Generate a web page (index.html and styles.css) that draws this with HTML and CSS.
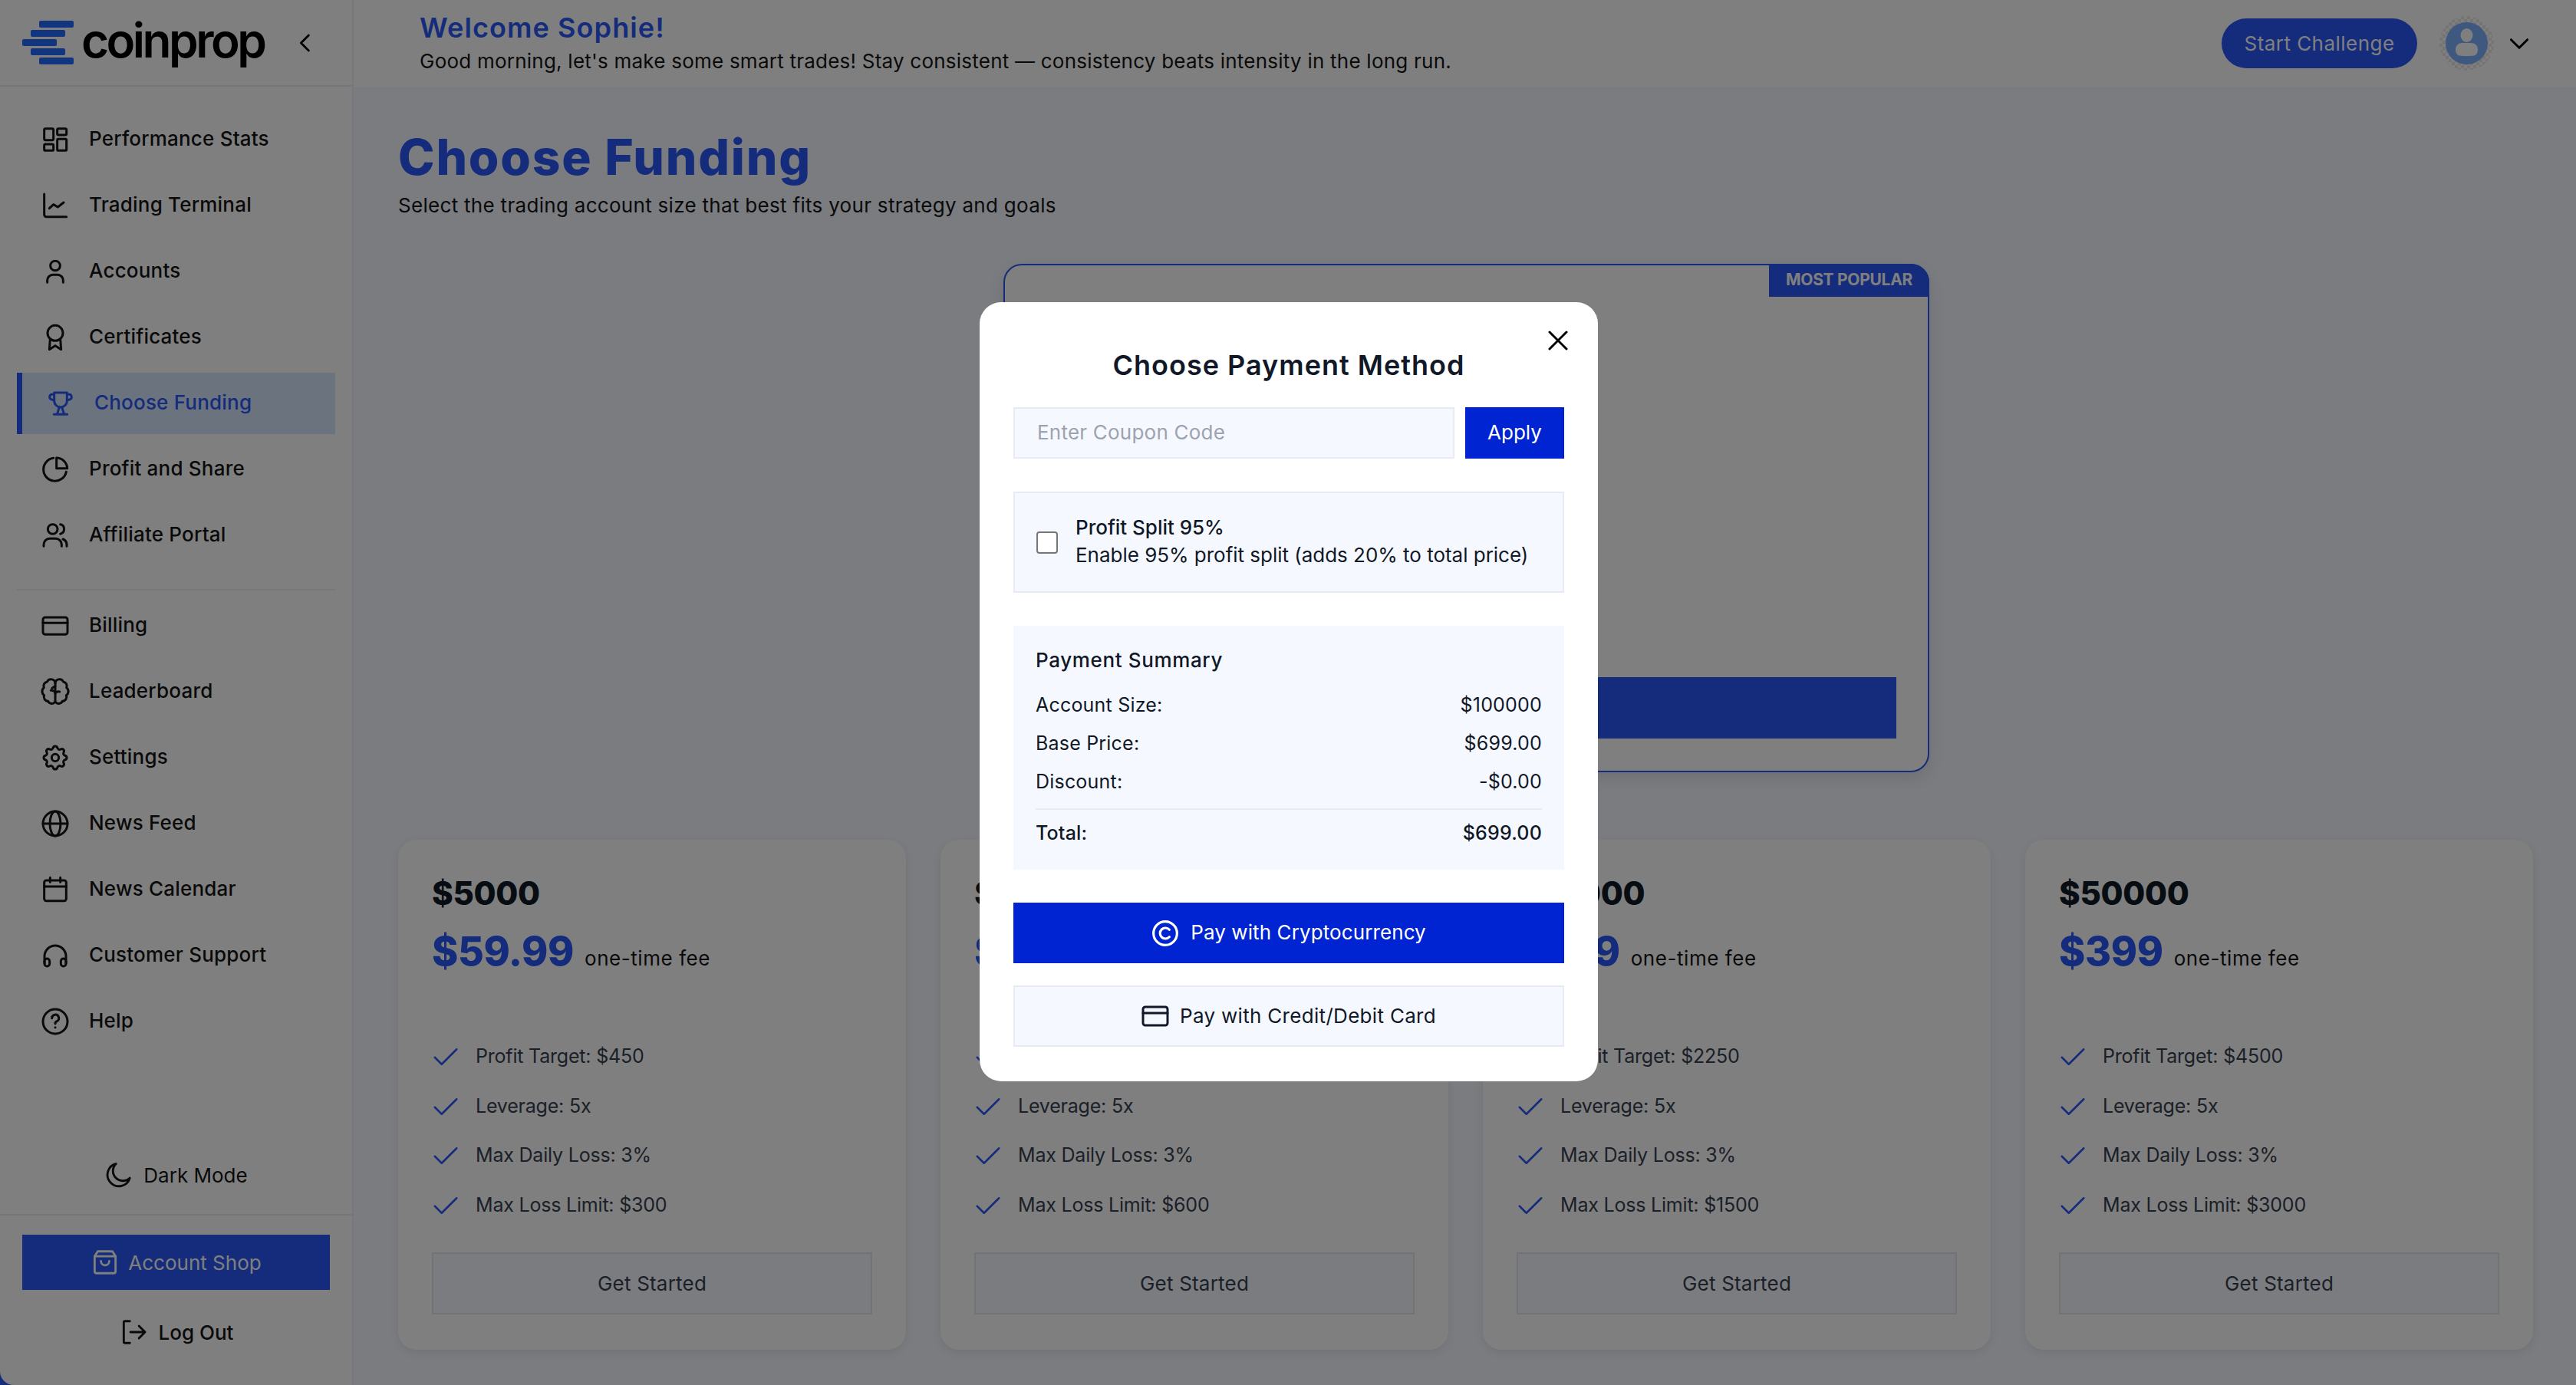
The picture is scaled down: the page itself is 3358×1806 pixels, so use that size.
FILE: index.html
```html
<!DOCTYPE html>
<html lang="en">
<head>
<meta charset="utf-8">
<title>Choose Funding</title>
<link rel="stylesheet" href="styles.css">
</head>
<body>
<svg class="sprite" aria-hidden="true">
  <symbol id="i-check" viewBox="0 0 24 24"><path d="M2.5 12.5l6 6 13-13"/></symbol>
</svg>
<div class="app">
  <aside class="sidebar">
    <div class="brand">
      <div class="logo">
        <span class="logo-bars"><i class="b1"></i><i class="b2"></i><i class="b3"></i><i class="b2"></i><i class="b1"></i></span>
        <span class="logo-text">coinprop</span>
      </div>
      <svg class="collapse" viewBox="0 0 24 24"><path d="M15.5 4l-8 8 8 8"/></svg>
    </div>
    <nav class="nav">
      <a class="nav-item"><svg class="ico" viewBox="0 0 24 24"><rect x="3.4" y="3.4" width="7.2" height="9" rx="1"/><rect x="13.6" y="3.4" width="7.2" height="5" rx="1"/><rect x="13.6" y="11.6" width="7.2" height="9" rx="1"/><rect x="3.4" y="15.6" width="7.2" height="5" rx="1"/></svg><span>Performance Stats</span></a>
      <a class="nav-item"><svg class="ico" viewBox="0 0 24 24"><path d="M3.4 3v16.2a1.6 1.6 0 0 0 1.6 1.6h15.8"/><path d="M7.4 14.2l3.2-3 3.4 2 4.6-3.6"/></svg><span>Trading Terminal</span></a>
      <a class="nav-item"><svg class="ico" viewBox="0 0 24 24"><circle cx="12" cy="7.5" r="3.8"/><path d="M5.8 20.5v-1.6a4.4 4.4 0 0 1 4.4-4.4h3.6a4.4 4.4 0 0 1 4.4 4.4v1.6"/></svg><span>Accounts</span></a>
      <a class="nav-item"><svg class="ico" viewBox="0 0 24 24"><circle cx="12" cy="8.6" r="6"/><path d="M8 13.4L7.4 21.4 12 18.4l4.6 3-.6-8"/></svg><span>Certificates</span></a>
      <a class="nav-item active"><svg class="ico" viewBox="0 0 24 24"><path d="M7 3.6h10v6.4a5 5 0 0 1-10 0z"/><path d="M7 5H5.4a2 2 0 0 0-.6 3.9L7 9.6M17 5h1.6a2 2 0 0 1 .6 3.9L17 9.6"/><path d="M11 15l-1.6 5M13 15l1.6 5M6.8 20.6h10.4"/></svg><span>Choose Funding</span></a>
      <a class="nav-item"><svg class="ico" viewBox="0 0 24 24"><path d="M20.6 14a9 9 0 1 1-10-10.8"/><path d="M13 3v8.2h8.4A8.6 8.6 0 0 0 13 3z"/></svg><span>Profit and Share</span></a>
      <a class="nav-item"><svg class="ico" viewBox="0 0 24 24"><circle cx="10" cy="7.2" r="3.8"/><path d="M3 20.6v-1.4a4.6 4.6 0 0 1 4.6-4.6h4.8a4.6 4.6 0 0 1 4.6 4.6v1.4"/><path d="M16 3.5a3.8 3.8 0 0 1 0 7.4"/><path d="M21 20.6v-1.4a4.6 4.6 0 0 0-3-4.2"/></svg><span>Affiliate Portal</span></a>
      <hr class="nav-sep">
      <a class="nav-item"><svg class="ico" viewBox="0 0 24 24"><rect x="2.4" y="5.4" width="19.2" height="13.4" rx="1.8"/><path d="M2.4 9.8h19.2"/></svg><span>Billing</span></a>
      <a class="nav-item"><svg class="ico" viewBox="0 0 24 24"><path d="M12 5.5a3.3 3.3 0 0 0-6.3-1.3 3.3 3.3 0 0 0-2.5 4.6 3.7 3.7 0 0 0 .2 6 3.3 3.3 0 0 0 3 4.6A3.2 3.2 0 0 0 12 19.8"/><path d="M12 5.5a3.3 3.3 0 0 1 6.3-1.3 3.3 3.3 0 0 1 2.5 4.6 3.7 3.7 0 0 1-.2 6 3.3 3.3 0 0 1-3 4.6A3.2 3.2 0 0 1 12 19.8z"/><path d="M12 13.4a3 3 0 0 0-3.4-2.4M12 13.4a3 3 0 0 1 3.4-1.4M9.5 9.2l2.5-1.5"/></svg><span>Leaderboard</span></a>
      <a class="nav-item"><svg class="ico" viewBox="0 0 24 24"><path d="M10.325 4.317c.426-1.756 2.924-1.756 3.35 0a1.724 1.724 0 0 0 2.573 1.066c1.543-.94 3.31.826 2.37 2.37a1.724 1.724 0 0 0 1.065 2.572c1.756.426 1.756 2.924 0 3.35a1.724 1.724 0 0 0-1.066 2.573c.94 1.543-.826 3.31-2.37 2.37a1.724 1.724 0 0 0-2.572 1.065c-.426 1.756-2.924 1.756-3.35 0a1.724 1.724 0 0 0-2.573-1.066c-1.543.94-3.31-.826-2.37-2.37a1.724 1.724 0 0 0-1.065-2.572c-1.756-.426-1.756-2.924 0-3.35a1.724 1.724 0 0 0 1.066-2.573c-.94-1.543.826-3.31 2.37-2.37 1 .608 2.296.07 2.572-1.065z"/><circle cx="12" cy="12" r="2.8"/></svg><span>Settings</span></a>
      <a class="nav-item"><svg class="ico" viewBox="0 0 24 24"><circle cx="12" cy="12" r="9.6"/><ellipse cx="12" cy="12" rx="4.2" ry="9.6"/><path d="M2.4 12h19.2"/></svg><span>News Feed</span></a>
      <a class="nav-item"><svg class="ico" viewBox="0 0 24 24"><rect x="3.4" y="4.8" width="17.2" height="16" rx="1.6"/><path d="M3.4 9.6h17.2M8 2.6v3.6M16 2.6v3.6"/></svg><span>News Calendar</span></a>
      <a class="nav-item"><svg class="ico" viewBox="0 0 24 24"><path d="M3.6 18v-5.4a8.4 8.4 0 0 1 16.8 0V18"/><rect x="3.6" y="14.4" width="4" height="6" rx="2"/><rect x="16.4" y="14.4" width="4" height="6" rx="2"/></svg><span>Customer Support</span></a>
      <a class="nav-item"><svg class="ico" viewBox="0 0 24 24"><circle cx="12" cy="12" r="9.6"/><path d="M9.4 9.4a2.7 2.7 0 1 1 3.9 2.4c-.9.4-1.3 1-1.3 1.8"/><path d="M12 16.6v.1"/></svg><span>Help</span></a>
    </nav>
    <div class="theme">
      <svg class="ico-sm" viewBox="0 0 24 24"><path d="M21 14.6A9.4 9.4 0 1 1 9.6 2.8 8 8 0 0 0 21 14.6z"/></svg>
      <span>Dark Mode</span>
    </div>
    <div class="side-foot">
      <a class="shop"><svg class="ico-sm" viewBox="0 0 24 24"><path d="M6 3h12l2.6 4v12.4a1.6 1.6 0 0 1-1.6 1.6H5a1.6 1.6 0 0 1-1.6-1.6V7z"/><path d="M3.4 7h17.2"/><path d="M8.6 11a3.4 3.4 0 0 0 6.8 0"/></svg><span>Account Shop</span></a>
      <a class="logout"><svg class="ico-sm" viewBox="0 0 24 24"><path d="M9 3H5a1 1 0 0 0-1 1v16a1 1 0 0 0 1 1h4"/><path d="M9.5 12h12M16.5 7l5 5-5 5"/></svg><span>Log Out</span></a>
    </div>
  </aside>

  <div class="page">
    <header class="topbar">
      <div class="greet">
        <h2 class="welcome">Welcome Sophie!</h2>
        <p class="tagline">Good morning, let's make some smart trades! Stay consistent — consistency beats intensity in the long run.</p>
      </div>
      <div class="top-actions">
        <a class="start">Start Challenge</a>
        <span class="avatar-ring"><svg class="avatar" viewBox="0 0 55 55"><circle class="av-bg" cx="27.5" cy="27.5" r="27.5"/><ellipse class="av-fg" cx="27.5" cy="17" rx="8" ry="9"/><path class="av-fg" d="M13 36c0-6 4-9 9-9h11c5 0 9 3 9 9 0 4-2 7-5 7.5-6 1-13 1-19 0-3-.5-5-3.500-5-7.500z"/></svg></span>
        <svg class="caret" viewBox="0 0 24 24"><path d="M4 8l8 8 8-8"/></svg>
      </div>
    </header>

    <main class="content">
      <h1 class="page-title">Choose Funding</h1>
      <p class="page-sub">Select the trading account size that best fits your strategy and goals</p>

      <section class="featured">
        <span class="badge">MOST POPULAR</span>
        <a class="featured-btn"></a>
      </section>

      <section class="plans">
        <article class="plan">
          <h3 class="size">$5000</h3>
          <div class="price-row"><span class="price">$59.99</span><span class="fee">one-time fee</span></div>
          <ul class="features">
            <li><svg class="tick"><use href="#i-check"/></svg><span>Profit Target: $450</span></li>
            <li><svg class="tick"><use href="#i-check"/></svg><span>Leverage: 5x</span></li>
            <li><svg class="tick"><use href="#i-check"/></svg><span>Max Daily Loss: 3%</span></li>
            <li><svg class="tick"><use href="#i-check"/></svg><span>Max Loss Limit: $300</span></li>
          </ul>
          <a class="get">Get Started</a>
        </article>
        <article class="plan">
          <h3 class="size">$10000</h3>
          <div class="price-row"><span class="price">$99.99</span><span class="fee">one-time fee</span></div>
          <ul class="features">
            <li><svg class="tick"><use href="#i-check"/></svg><span>Profit Target: $900</span></li>
            <li><svg class="tick"><use href="#i-check"/></svg><span>Leverage: 5x</span></li>
            <li><svg class="tick"><use href="#i-check"/></svg><span>Max Daily Loss: 3%</span></li>
            <li><svg class="tick"><use href="#i-check"/></svg><span>Max Loss Limit: $600</span></li>
          </ul>
          <a class="get">Get Started</a>
        </article>
        <article class="plan">
          <h3 class="size">$25000</h3>
          <div class="price-row"><span class="price">$299</span><span class="fee">one-time fee</span></div>
          <ul class="features">
            <li><svg class="tick"><use href="#i-check"/></svg><span>Profit Target: $2250</span></li>
            <li><svg class="tick"><use href="#i-check"/></svg><span>Leverage: 5x</span></li>
            <li><svg class="tick"><use href="#i-check"/></svg><span>Max Daily Loss: 3%</span></li>
            <li><svg class="tick"><use href="#i-check"/></svg><span>Max Loss Limit: $1500</span></li>
          </ul>
          <a class="get">Get Started</a>
        </article>
        <article class="plan">
          <h3 class="size">$50000</h3>
          <div class="price-row"><span class="price">$399</span><span class="fee">one-time fee</span></div>
          <ul class="features">
            <li><svg class="tick"><use href="#i-check"/></svg><span>Profit Target: $4500</span></li>
            <li><svg class="tick"><use href="#i-check"/></svg><span>Leverage: 5x</span></li>
            <li><svg class="tick"><use href="#i-check"/></svg><span>Max Daily Loss: 3%</span></li>
            <li><svg class="tick"><use href="#i-check"/></svg><span>Max Loss Limit: $3000</span></li>
          </ul>
          <a class="get">Get Started</a>
        </article>
      </section>
    </main>
  </div>
</div>

<div class="overlay">
  <div class="modal">
    <svg class="close" viewBox="0 0 26 26"><path d="M2 2l22 22M24 2L2 24"/></svg>
    <h2 class="modal-title">Choose Payment Method</h2>
    <div class="coupon">
      <input class="coupon-input" type="text" placeholder="Enter Coupon Code">
      <a class="apply">Apply</a>
    </div>
    <label class="split">
      <input class="split-check" type="checkbox">
      <span class="split-text"><span class="split-name">Profit Split 95%</span><span>Enable 95% profit split (adds 20% to total price)</span></span>
    </label>
    <div class="summary">
      <h4 class="summary-title">Payment Summary</h4>
      <div class="row first"><span>Account Size:</span><span>$100000</span></div>
      <div class="row"><span>Base Price:</span><span>$699.00</span></div>
      <div class="row"><span>Discount:</span><span>-$0.00</span></div>
      <div class="row total"><span>Total:</span><span>$699.00</span></div>
    </div>
    <a class="pay crypto"><svg class="pay-ico" viewBox="0 0 34 34"><circle cx="17" cy="17" r="14.5"/><path d="M22 12.5a6.6 6.6 0 1 0 0 9"/></svg><span>Pay with Cryptocurrency</span></a>
    <a class="pay card"><svg class="pay-ico" viewBox="0 0 36 36"><rect x="2" y="6" width="32" height="24" rx="3"/><path d="M2 14h32"/></svg><span>Pay with Credit/Debit Card</span></a>
  </div>
</div>
</body>
</html>
```

FILE: styles.css
```css
* { box-sizing: border-box; }
html, body { margin: 0; height: 100%; }
body {
  background: #2858f6;
  font-family: Inter, "Liberation Sans", sans-serif;
  color: #141414;
  overflow: hidden;
}
.sprite { display: none; }
h1, h2, h3, h4, p, ul { margin: 0; padding: 0; }
svg { fill: none; stroke: currentColor; stroke-linecap: round; stroke-linejoin: round; }

.app { display: flex; height: 1806px; }

/* Sidebar */
.sidebar {
  width: 461px;
  flex: none;
  display: flex;
  flex-direction: column;
  background: #fff;
  border-right: 2px solid #f0f1f5;
  border-bottom-left-radius: 18px;
}
.brand {
  height: 113px;
  flex: none;
  display: flex;
  align-items: center;
  padding: 0 0 0 29px;
  border-bottom: 2px solid #eceef2;
}
.logo { display: flex; align-items: center; gap: 10px; }
.logo-bars { display: flex; flex-direction: column; gap: 3px; width: 67px; }
.logo-bars i { display: block; height: 9px; width: 45px; background: #246afe; border-radius: 2px; }
.logo-bars .b1 { margin-left: 22px; }
.logo-bars .b2 { margin-left: 11px; }
.logo-text {
  font-size: 62px;
  font-weight: 600;
  line-height: 60px;
  letter-spacing: -3.5px;
  color: #000;
  margin-top: -6px;
}
.collapse { width: 30px; height: 30px; margin-left: 39px; stroke-width: 2.2; color: #000; }

.nav {
  flex: 1;
  display: flex;
  flex-direction: column;
  gap: 6px;
  padding: 29px 22px 0;
}
.nav-item {
  height: 80px;
  display: flex;
  align-items: center;
  gap: 24px;
  padding-left: 30px;
  font-size: 26px;
  font-weight: 500;
  letter-spacing: 0.2px;
}
.nav-item span { margin-top: -3px; }
.nav-item.active {
  background: #d6e6ff;
  border-left: 7px solid #2858f6;
  color: #2858f6;
}
.ico { width: 40px; height: 40px; flex: none; stroke-width: 1.8; }
.nav-sep { width: 100%; height: 2px; margin: 24px 0 0; border: 0; background: #eceef2; }

.theme {
  height: 100px;
  flex: none;
  display: flex;
  align-items: center;
  justify-content: center;
  gap: 13px;
  padding-bottom: 2px;
  font-size: 26px;
}
.ico-sm { width: 38px; height: 38px; flex: none; stroke-width: 1.8; }
.side-foot {
  flex: none;
  height: 223px;
  padding: 25px 29px 0;
  border-top: 2px solid #eceef2;
}
.shop {
  height: 72px;
  display: flex;
  align-items: center;
  justify-content: center;
  gap: 11px;
  background: #2858f6;
  color: #fff;
  font-size: 26px;
}
.logout {
  height: 80px;
  margin-top: 15px;
  display: flex;
  align-items: center;
  justify-content: center;
  gap: 14px;
  font-size: 26px;
  font-weight: 500;
}

/* Page */
.page { flex: 1; min-width: 0; display: flex; flex-direction: column; background: #f6f8ff; }
.topbar {
  height: 113px;
  flex: none;
  display: flex;
  align-items: center;
  justify-content: space-between;
  padding: 0 54px 0 86px;
  background: #fff;
}
.greet { padding-top: 3px; }
.welcome { font-size: 36px; line-height: 44px; font-weight: 600; letter-spacing: 1.1px; color: #2858f6; }
.tagline { font-size: 26px; line-height: 44px; letter-spacing: 0.23px; }
.top-actions { display: flex; align-items: center; }
.start {
  width: 255px;
  height: 65px;
  display: flex;
  align-items: center;
  justify-content: center;
  border-radius: 33px;
  background: #2858f6;
  color: #fff;
  font-size: 26px;
  letter-spacing: 0.46px;
}
.avatar-ring {
  width: 71px;
  height: 71px;
  margin-left: 29px;
  display: flex;
  align-items: center;
  justify-content: center;
  border-radius: 50%;
  background: repeating-conic-gradient(#e8e8e8 0 25%, #fff 0 50%) 0 0 / 8px 8px;
}
.avatar { width: 55px; height: 55px; stroke: none; }
.av-bg { fill: #7eb0ff; }
.av-fg { fill: #fff; }
.caret { width: 32px; height: 32px; margin-left: 17px; margin-right: 4px; stroke-width: 2.2; color: #000; }

.content { flex: 1; padding: 50px 56px 0 58px; }
.page-title { font-size: 64px; line-height: 84px; font-weight: 800; letter-spacing: 1.8px; color: #2858f6; }
.page-sub { font-size: 26px; line-height: 42px; letter-spacing: 0.3px; }

.featured {
  position: relative;
  width: 1207px;
  height: 663px;
  margin: 55px 0 0 789px;
  display: flex;
  flex-direction: column;
  justify-content: flex-end;
  padding: 0 41px 42px;
  background: #fff;
  border: 2px solid #2858f6;
  border-radius: 24px;
  box-shadow: 0 8px 20px rgba(0, 0, 0, 0.1);
}
.badge {
  position: absolute;
  top: -2px;
  right: -2px;
  width: 209px;
  height: 43px;
  padding-bottom: 2px;
  display: flex;
  align-items: center;
  justify-content: center;
  background: #2858f6;
  color: #fff;
  font-size: 21px;
  font-weight: 700;
  letter-spacing: -0.3px;
  border-top-right-radius: 24px;
}
.featured-btn { display: block; height: 80px; background: #2858f6; }

.plans {
  display: grid;
  grid-template-columns: repeat(4, 1fr);
  gap: 45px;
  margin-top: 88px;
}
.plan {
  height: 665px;
  padding: 40px 44px 0;
  background: #fff;
  border-radius: 24px;
  box-shadow: 0 4px 12px rgba(0, 0, 0, 0.08);
}
.size { font-size: 42px; line-height: 60px; font-weight: 800; letter-spacing: -0.3px; color: #111827; }
.price-row { height: 76px; margin-top: 8px; display: flex; align-items: baseline; gap: 14px; line-height: 76px; }
.price { font-size: 52px; font-weight: 800; letter-spacing: -0.4px; color: #2858f6; }
.fee { font-size: 26px; letter-spacing: 0.56px; color: #141414; }
.features {
  margin-top: 79px;
  list-style: none;
  display: flex;
  flex-direction: column;
  gap: 24.7px;
}
.features li {
  height: 40px;
  display: flex;
  align-items: center;
  gap: 21px;
  font-size: 25px;
  letter-spacing: -0.2px;
  color: #374151;
}
.features li span { margin-top: -2px; }
.tick { width: 36px; height: 36px; flex: none; stroke-width: 1.7; color: #2858f6; }
.get {
  height: 81px;
  margin-top: 41px;
  display: flex;
  align-items: center;
  justify-content: center;
  background: #f6f8ff;
  border: 2px solid #e5e7eb;
  font-size: 26px;
  letter-spacing: 0.2px;
  color: #374151;
}

/* Modal */
.overlay {
  position: fixed;
  inset: 0;
  padding: 0 0 2px 2px;
  display: flex;
  align-items: center;
  justify-content: center;
  background: rgba(0, 0, 0, 0.5);
}
.modal {
  position: relative;
  width: 806px;
  height: 1016px;
  padding: 56px 44px 0;
  background: #fff;
  border-radius: 28px;
  color: #111827;
}
.close { position: absolute; top: 37px; right: 39px; width: 26px; height: 26px; stroke-width: 3; color: #000; }
.modal-title { font-size: 36px; line-height: 52px; font-weight: 600; letter-spacing: 1px; text-align: center; }
.coupon { display: flex; gap: 14px; height: 67px; margin-top: 29px; }
.coupon-input {
  flex: 1;
  min-width: 0;
  padding: 0 29px 2px;
  background: #f6f8ff;
  border: 2px solid #e8ebf3;
  border-radius: 0;
  outline: 0;
  font: 400 26px Inter, "Liberation Sans", sans-serif;
  letter-spacing: 0.22px;
  color: #111827;
}
.coupon-input::placeholder { color: #9ca3af; opacity: 1; }
.apply {
  width: 129px;
  padding-bottom: 2px;
  display: flex;
  align-items: center;
  justify-content: center;
  background: #0024d1;
  color: #fff;
  font-size: 26px;
}
.split {
  height: 132px;
  margin-top: 43px;
  display: flex;
  align-items: center;
  gap: 23px;
  padding: 0 28px;
  background: #f6f8ff;
  border: 2px solid #e8ebf3;
  font-size: 26px;
  line-height: 36px;
}
.split-check {
  appearance: none;
  width: 28px;
  height: 29px;
  margin: 0;
  flex: none;
  background: #fff;
  border: 2px solid #767676;
  border-radius: 4px;
}
.split-text { display: flex; flex-direction: column; margin-top: -2px; letter-spacing: -0.02px; }
.split-name { font-weight: 500; }
.summary {
  height: 318px;
  margin-top: 43px;
  padding: 25px 29px 0;
  background: #f6f8ff;
  font-size: 25px;
  letter-spacing: 0.2px;
}
.summary-title { font-size: 26px; line-height: 40px; font-weight: 500; letter-spacing: 0.64px; }
.row { display: flex; justify-content: space-between; height: 40px; line-height: 40px; margin-top: 10px; }
.row.first { margin-top: 18px; }
.row.total { height: 52px; line-height: 60px; margin-top: 15px; border-top: 2px solid #e8ebf3; font-weight: 500; }
.pay {
  display: flex;
  align-items: center;
  justify-content: center;
  font-size: 26px;
}
.pay span { margin-top: -2px; letter-spacing: 0.1px; }
.crypto { height: 79px; margin-top: 43px; gap: 15px; background: #0024d1; color: #fff; }
.card { height: 80px; margin-top: 29px; gap: 14px; background: #f6f8ff; border: 2px solid #e8ebf3; }
.card span { letter-spacing: 0.31px; }
.pay-ico { width: 36px; height: 36px; flex: none; stroke-width: 3; }
```
